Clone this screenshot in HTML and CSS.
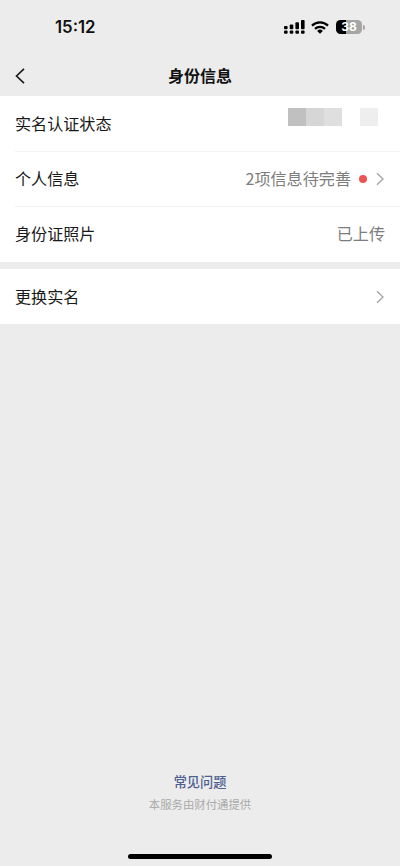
FILE: index.html
```html
<!DOCTYPE html>
<html lang="zh-CN">
<head>
<meta charset="utf-8">
<title>身份信息</title>
<link rel="stylesheet" href="styles.css">
</head>
<body>
<div class="screen">
  <header class="status">
    <time class="clock">15:12</time>
    <div class="status-icons">
      <svg class="signal" width="21" height="14" viewBox="0 0 21 14">
        <rect x="0" y="6" width="3.6" height="3.2" rx="1"/>
        <rect x="5.7" y="4.5" width="3.6" height="4.7" rx="1"/>
        <rect x="11.4" y="2.3" width="3.6" height="6.9" rx="1"/>
        <rect x="17" y="0" width="3.6" height="9.2" rx="1"/>
        <rect x="0" y="10.4" width="3.6" height="3.4" rx="1"/>
        <rect x="5.7" y="10.4" width="3.6" height="3.4" rx="1"/>
        <rect x="11.4" y="10.4" width="3.6" height="3.4" rx="1"/>
        <rect x="17" y="10.4" width="3.6" height="3.4" rx="1"/>
      </svg>
      <svg class="wifi" width="18" height="13" viewBox="0 0 18 13">
        <path d="M1 4.6a11.6 11.6 0 0 1 16 0" fill="none" stroke="#000" stroke-width="2.3"/>
        <path d="M4 7.9a7.3 7.3 0 0 1 10 0" fill="none" stroke="#000" stroke-width="2.2"/>
        <path d="M9 12.8 6.1 9.9a4.2 4.2 0 0 1 5.8 0z"/>
      </svg>
      <div class="battery"><span class="level">38</span><i class="nub"></i></div>
    </div>
  </header>
  <nav class="nav">
    <svg class="back" width="10" height="16" viewBox="0 0 10 16"><path d="M9 .8 1.5 8 9 15.2"/></svg>
    <h1 class="title">身份信息</h1>
  </nav>
  <main>
    <section class="group">
      <div class="row"><span class="label">实名认证状态</span>
        <span class="mosaic"><i class="m1"></i><i class="m2"></i><i class="m3"></i><i></i><i class="m4"></i></span>
      </div>
      <div class="row"><span class="label">个人信息</span>
        <span class="value"><span class="label">2项信息待完善</span><i class="dot"></i><svg class="chevron" width="8" height="14" viewBox="0 0 8 14"><path d="m1 1.2 6 5.8-6 5.8"/></svg></span>
      </div>
      <div class="row"><span class="label">身份证照片</span><span class="value"><span class="label">已上传</span></span></div>
    </section>
    <section class="group">
      <div class="row"><span class="label">更换实名</span><svg class="chevron" width="8" height="14" viewBox="0 0 8 14"><path d="m1 1.2 6 5.8-6 5.8"/></svg></div>
    </section>
  </main>
  <footer class="footer">
    <a class="faq">常见问题</a>
    <p class="provider">本服务由财付通提供</p>
    <div class="home"></div>
  </footer>
</div>
</body>
</html>
```
FILE: styles.css
```css
* { box-sizing: border-box; }
body { margin: 0; background: #ececec; font-family: "Noto Sans CJK SC", sans-serif; color: #191919; }
.screen { height: 866px; display: flex; flex-direction: column; overflow: hidden; }
.status { height: 56px; padding: 17px 36px 0 55px; display: flex; justify-content: space-between; align-items: flex-start; }
.clock { font: 600 16.8px/21px Inter, sans-serif; color: #111; }
.status-icons { display: flex; align-items: center; padding-top: 3px; }
.signal { margin-right: 6px; }
.wifi { margin-right: 7px; }
.battery { display: flex; align-items: center; }
.level { width: 26px; height: 14px; border-radius: 4.5px; background: linear-gradient(90deg, #000 40%, #a5a5a5 40%); color: #fff; font: 700 12px/14px Inter, sans-serif; text-align: center; }
.nub { width: 2px; height: 5px; margin-left: 1px; margin-right: -1px; border-radius: 0 2px 2px 0; background: #a5a5a5; }
.nav { height: 40px; display: grid; grid-template-columns: 1fr auto 1fr; align-items: center; padding: 0 15px; }
.back { fill: none; stroke: #191919; stroke-width: 1.6; }
.title { margin: 0; padding-bottom: 2px; font-size: 16px; line-height: 24px; font-weight: 700; color: #111; }
.group { background: #fff; margin-bottom: 7px; padding-left: 15px; }
.row { height: 55px; padding-right: 15px; display: flex; align-items: center; justify-content: space-between; font-size: 16.1px; line-height: 24px; }
.label { padding-bottom: 2px; }
.row + .row { border-top: 1px solid #f3f3f3; }
.row:nth-child(3) { height: 56px; padding-bottom: 1px; }
.value { display: flex; align-items: center; color: #7d7d7d; }
.dot { width: 8px; height: 8px; border-radius: 50%; background: #ee5451; margin: 0 9px 0 8px; }
.chevron { margin-right: 1px; fill: none; stroke: #a6a6a6; stroke-width: 1.4; }
.mosaic { display: flex; margin: -13px 7px 0 0; }
.mosaic i { width: 18px; height: 18px; }
.mosaic .m1 { background: #c0c0c0; }
.mosaic .m2 { background: #d6d6d6; }
.mosaic .m3 { background: #dfdfdf; }
.mosaic .m4 { background: #eee; }
.footer { margin-top: auto; padding-bottom: 7px; display: flex; flex-direction: column; align-items: center; }
.faq { font-size: 13.2px; line-height: 20px; font-weight: 500; color: #505f91; }
.provider { margin: 4px 0 41px; font-size: 11.4px; line-height: 17px; color: #aaa; }
.home { width: 144px; height: 5px; border-radius: 3px; background: #000; }
```
